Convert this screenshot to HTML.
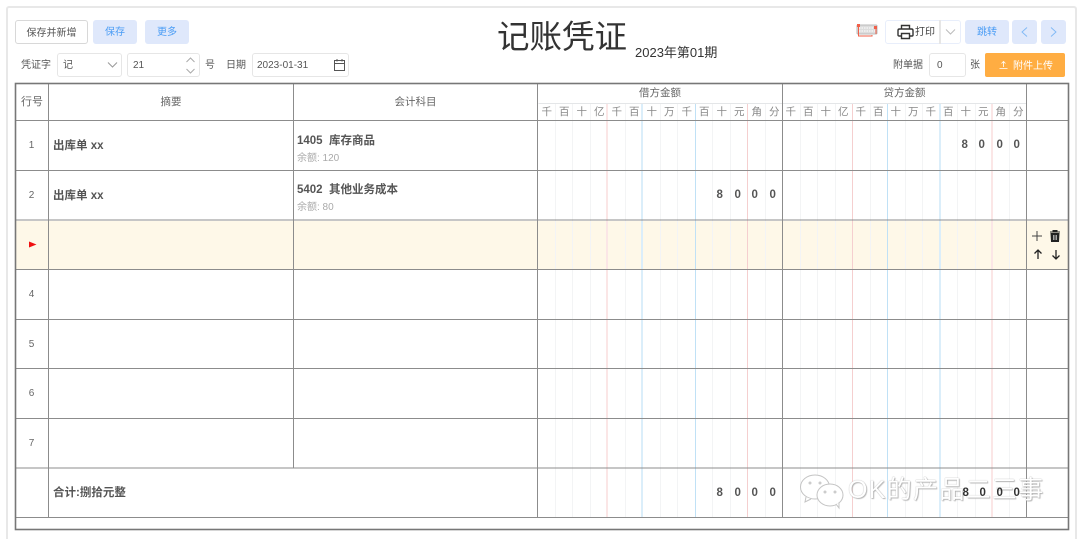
<!DOCTYPE html>
<html lang="zh"><head><meta charset="utf-8"><title>记账凭证</title>
<style>
html,body{margin:0;padding:0;background:#fff;overflow:hidden;height:539px}
#p{position:relative;width:1080px;height:539px;overflow:hidden;background:#fff;font-family:"Liberation Sans","Noto Sans CJK SC",sans-serif;color:#555;font-size:10px;filter:blur(.35px)}
#p div{position:absolute;white-space:nowrap;box-sizing:border-box}
.btn{border-radius:3px;text-align:center;background:#dfe8fb;color:#4b9df5;height:24px;line-height:26px;top:20px}
.inp{border:1px solid #e6e6e6;border-radius:3px;height:24px;line-height:24px;top:53px;background:#fff;padding-left:5px;color:#555;font-size:10px}
.l{color:#555;line-height:15px;font-size:10px}
.hd{color:#666;text-align:center;font-size:10.500px;line-height:14px}
.row{display:flex;color:#888;font-size:10.500px;line-height:14px;top:105px;height:14px}
.row span{width:17.500px;text-align:center;display:block}
.b{font-weight:bold;color:#555;font-size:11.500px;line-height:14px}
.s{color:#aaa;font-size:10px;line-height:12px}
.n{color:#666;font-size:10px;line-height:12px;width:33px;left:15px;text-align:center}
.d{font-weight:bold;color:#555;font-size:11.500px;line-height:14px;width:17.500px;text-align:center}
</style></head><body><div id="p">
<div style="left:6px;top:6px;width:1071px;height:533px;border:2px solid #e8e8e8;border-bottom:0;border-radius:3px 3px 0 0"></div>

<div class="btn" style="left:15px;width:73px;background:#fff;border:1px solid #d8d8d8;color:#555;line-height:25px">保存并新增</div>
<div class="btn" style="left:93px;width:44px">保存</div>
<div class="btn" style="left:145px;width:44px">更多</div>

<div class="l" style="left:21px;top:58px">凭证字</div>
<div class="inp" style="left:57px;width:65px">记</div>
<svg style="position:absolute;left:107px;top:61px" width="11" height="8"><path d="M1 1.500L5.500 6L10 1.500" fill="none" stroke="#999"/></svg>
<div class="inp" style="left:127px;width:73px">21</div>
<svg style="position:absolute;left:185px;top:56px" width="11" height="19"><path d="M1.500 6L5.500 2L9.500 6M1.500 13L5.500 17L9.500 13" fill="none" stroke="#aaa"/></svg>
<div class="l" style="left:205px;top:58px">号</div>
<div class="l" style="left:226px;top:58px">日期</div>
<div class="inp" style="left:252px;width:97px;padding-left:4px">2023-01-31</div>
<svg style="position:absolute;left:333px;top:58px" width="13" height="14"><path d="M1.500 2.500H11.500V12.500H1.500ZM1.500 5.500H11.500M4 1V3.500M9 1V3.500" fill="none" stroke="#555"/></svg>

<div style="left:497px;top:17px;font-size:32.500px;line-height:40px;color:#333">记账凭证</div>
<div style="left:635px;top:44px;font-size:13px;line-height:17px;color:#333">2023年第01期</div>

<svg style="position:absolute;left:856px;top:23px" width="23" height="15"><rect x="1" y="2" width="20" height="9" rx="1" fill="#ddd" stroke="#bbb"/><path d="M3 5H19M3 8H19" stroke="#fff" stroke-dasharray="1.500 1"/><path d="M2.500 3V13H16V12M20 3V11" fill="none" stroke="#f0604a"/><path d="M1 1h3v3H1zM18 3h3v3h-3z" fill="#f0604a"/></svg>
<div style="left:885px;top:20px;width:76px;height:24px;border:1px solid #e8eefb;border-radius:3px"></div>
<div style="left:939px;top:20px;width:2px;height:24px;background:#e6e6e6"></div>
<svg style="position:absolute;left:897px;top:24px" width="17" height="16"><path d="M4.500 5V1.500H12.500V5M4.500 12H2C1.300 12 1 11.500 1 11V6.500C1 5.500 1.700 5 2.500 5H14.500C15.300 5 16 5.500 16 6.500V11C16 11.500 15.700 12 15 12H12.500M4.500 9.500H12.500V14.500H4.500Z" fill="none" stroke="#333" stroke-width="1.400"/></svg>
<div class="l" style="left:915px;top:25px;color:#444">打印</div>
<svg style="position:absolute;left:945px;top:28px" width="11" height="8"><path d="M1 1.500L5.500 6L10 1.500" fill="none" stroke="#bbb"/></svg>
<div class="btn" style="left:965px;width:44px">跳转</div>
<div class="btn" style="left:1012px;width:25px"></div>
<div class="btn" style="left:1041px;width:25px"></div>
<svg style="position:absolute;left:1020px;top:26px" width="9" height="12"><path d="M7 1.500L2 6L7 10.500" fill="none" stroke="#7fb8f5" stroke-width=".9"/></svg>
<svg style="position:absolute;left:1049px;top:26px" width="9" height="12"><path d="M2 1.500L7 6L2 10.500" fill="none" stroke="#7fb8f5" stroke-width=".9"/></svg>

<div class="l" style="left:893px;top:58px">附单据</div>
<div class="inp" style="left:929px;width:37px;padding-left:7px">0</div>
<div class="l" style="left:970px;top:58px">张</div>
<div style="left:985px;top:53px;width:80px;height:24px;background:#ffad42;border-radius:2px;color:#fff;line-height:27px;padding-left:28px">附件上传</div>
<svg style="position:absolute;left:998px;top:59px" width="11" height="12"><path d="M5.500 8V2.500M3.500 4.500L5.500 2.500L7.500 4.500M1.500 9.500H9.500" fill="none" stroke="#fff" stroke-width=".8"/></svg>

<div style="left:16px;top:221px;width:1052px;height:48px;background:#fef8e8"></div>

<svg style="position:absolute;left:0;top:0" width="1080" height="539" fill="none">
<path stroke="#f3f4f5" d="M555.500 104V517M572.500 104V517M590.500 104V517M625.500 104V517M660.500 104V517M677.500 104V517M712.500 104V517M730.500 104V517M765.500 104V517M800.500 104V517M817.500 104V517M835.500 104V517M870.500 104V517M905.500 104V517M922.500 104V517M957.500 104V517M975.500 104V517M1009.500 104V517"/>
<path stroke="#fbe6e6" stroke-width="2" d="M607 104V517M992 104V517"/>
<path stroke="#f5cfcf" d="M747.500 104V517M852.500 104V517"/>
<path stroke="#dbeefa" stroke-width="2" d="M642 104V517M940 104V517"/>
<path stroke="#c0e1f6" d="M695.500 104V517M887.500 104V517"/>
<path stroke="#e4e6e8" d="M538.500 103.500H1026"/>
<path stroke="#8c8c8c" d="M48.500 83V517M293.500 83V468M537.500 83V517M782.500 83V517M1026.500 83V517"/>
<path stroke="#8c8c8c" d="M16 120.500H1068M16 170.500H1068M16 220H1068M16 269.500H1068M16 319.500H1068M16 368.500H1068M16 418.500H1068M16 468H1068M16 517.500H1068"/>
<rect x="15.500" y="83.500" width="1053" height="446" stroke="#777" stroke-width="1.600"/>
</svg>

<div class="hd" style="left:16px;top:95px;width:32px;font-size:11px">行号</div>
<div class="hd" style="left:49px;top:95px;width:244px">摘要</div>
<div class="hd" style="left:294px;top:95px;width:243px">会计科目</div>
<div class="hd" style="left:538px;top:86px;width:244px">借方金额</div>
<div class="hd" style="left:783px;top:86px;width:243px">贷方金额</div>
<div class="row" style="left:538px"><span>千</span><span>百</span><span>十</span><span>亿</span><span>千</span><span>百</span><span>十</span><span>万</span><span>千</span><span>百</span><span>十</span><span>元</span><span>角</span><span>分</span></div>
<div class="row" style="left:782px"><span>千</span><span>百</span><span>十</span><span>亿</span><span>千</span><span>百</span><span>十</span><span>万</span><span>千</span><span>百</span><span>十</span><span>元</span><span>角</span><span>分</span></div>

<div class="n" style="top:140px">1</div>
<div class="n" style="top:190px">2</div>
<svg style="position:absolute;left:29px;top:241px" width="8" height="8"><path d="M0 .5L7.500 3.500L0 6.500Z" fill="#f01010"/></svg>
<div class="n" style="top:289px">4</div>
<div class="n" style="top:339px">5</div>
<div class="n" style="top:388px">6</div>
<div class="n" style="top:438px">7</div>

<div class="b" style="left:53px;top:139px">出库单 xx</div>
<div class="b" style="left:53px;top:189px">出库单 xx</div>
<div class="b" style="left:297px;top:134px">1405&nbsp; 库存商品</div>
<div class="s" style="left:297px;top:153px">余额: 120</div>
<div class="b" style="left:297px;top:183px">5402&nbsp; 其他业务成本</div>
<div class="s" style="left:297px;top:202px">余额: 80</div>
<div class="b" style="left:53px;top:486px">合计:捌拾元整</div>

<div class="d" style="left:956px;top:138px">8</div><div class="d" style="left:973px;top:138px">0</div><div class="d" style="left:991px;top:138px">0</div><div class="d" style="left:1008px;top:138px">0</div>
<div class="d" style="left:711px;top:188px">8</div><div class="d" style="left:729px;top:188px">0</div><div class="d" style="left:746px;top:188px">0</div><div class="d" style="left:764px;top:188px">0</div>
<div class="d" style="left:711px;top:486px">8</div><div class="d" style="left:729px;top:486px">0</div><div class="d" style="left:746px;top:486px">0</div><div class="d" style="left:764px;top:486px">0</div>

<svg style="position:absolute;left:1030px;top:228px" width="34" height="34" fill="none"><path d="M7 3V13M2 8H12" stroke="#444"/><path d="M20 4H30M23 4V2.500H27V4M21 5.500H29L28.500 13.500H21.500Z" stroke="#222" fill="#222" stroke-width="1"/><path d="M23.500 7V12M25 7V12M26.500 7V12" stroke="#fff" stroke-width=".6"/><path d="M8 31V22M4.500 25.500L8 22L11.500 25.500M26 22V31M22.500 27.500L26 31L29.500 27.500" stroke="#222" stroke-width="1.300"/></svg>

<svg style="position:absolute;left:798px;top:472px" width="50" height="38" fill="#fff" stroke="#c4c4c4"><ellipse cx="17" cy="15" rx="14.500" ry="12"/><path d="M8 25L7 30L13 27"/><ellipse cx="32" cy="23" rx="13" ry="11" /><path d="M38 32L41 36L41 31"/><circle cx="12" cy="11" r="1.500" fill="#ccc" stroke="none"/><circle cx="22" cy="11" r="1.500" fill="#ccc" stroke="none"/><circle cx="27" cy="20" r="1.500" fill="#ccc" stroke="none"/><circle cx="37" cy="20" r="1.500" fill="#ccc" stroke="none"/></svg>
<div style="left:848px;top:475px;font-size:25px;line-height:30px;color:#fff;text-shadow:0 0 1px #999,1px 1px 1px #bbb;letter-spacing:1.300px">OK的产品二三事</div>
<div class="d" style="left:957px;top:486px;color:#333">8</div><div class="d" style="left:974px;top:486px;color:#333">0</div><div class="d" style="left:991px;top:486px;color:#333">0</div><div class="d" style="left:1008px;top:486px;color:#333">0</div>
</div></body></html>
